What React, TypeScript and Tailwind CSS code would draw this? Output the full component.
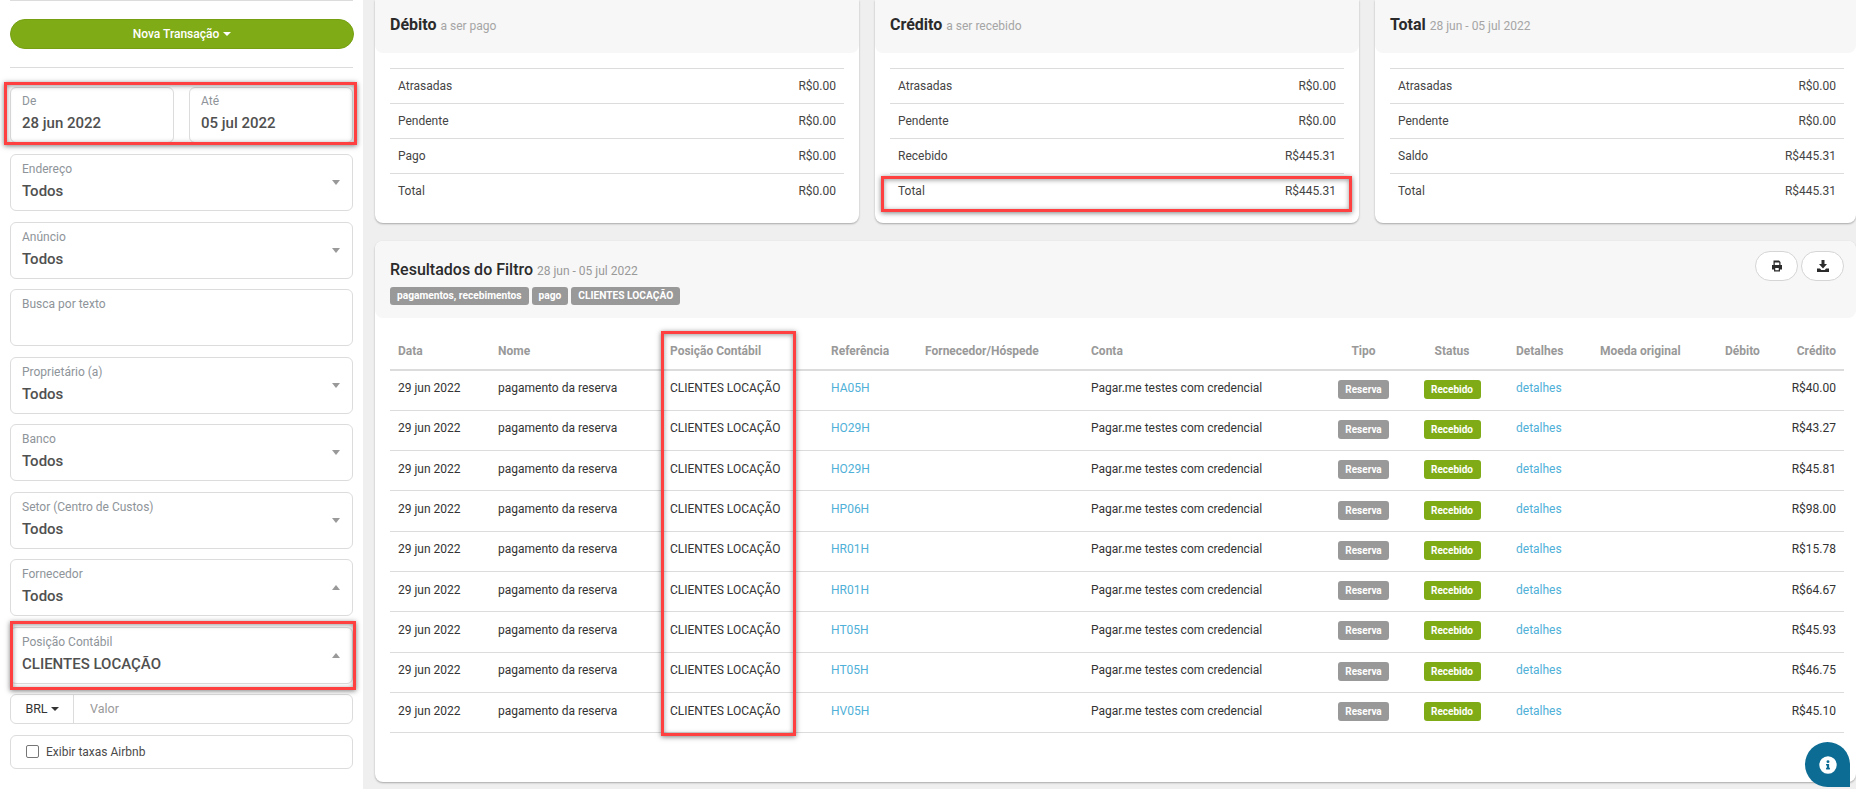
import React from 'react';

const font = { fontFamily: 'Roboto, sans-serif' };

const caret = 'w-0 h-0 border-x-[4px] border-x-transparent';

const SelectBox = ({ label, value, up }: { label: string; value: string; up?: boolean }) => (
  <div className="relative mx-[10px] h-[57px] border border-[#dcdcdc] rounded-[6px] bg-white pl-[11px] pt-[4px]">
    <div className="text-[12px] leading-[20px] text-[#8e9499]">{label}</div>
    <div className="text-[15px] leading-[24px] text-[#505050] font-medium">{value}</div>
    <span
      className={`absolute right-[12px] top-[25px] ${caret} ${up ? 'border-b-[5px] border-b-[#999]' : 'border-t-[5px] border-t-[#999]'}`}
    />
  </div>
);

const Sidebar = () => (
  <aside className="w-[363px] shrink-0 bg-white h-[789px] overflow-hidden">
    <div className="mx-[10px] border-t border-[#dcdcdc]" />
    <button className="mt-[18px] mx-[10px] w-[344px] h-[30px] flex items-center justify-center gap-[4px] rounded-full bg-[#7fac16] border border-[#76a012] text-white text-[12px] font-medium">
      Nova Transação
      <span className={`${caret} border-t-[4px] border-t-white`} />
    </button>
    <div className="mt-[18px] mx-[10px] border-t border-[#dcdcdc]" />
    <div className="mt-[19px] mx-[10px] flex justify-between">
      {[
        ['De', '28 jun 2022'],
        ['Até', '05 jul 2022'],
      ].map(([l, v]) => (
        <div key={l} className="w-[164px] h-[56px] border border-[#dcdcdc] rounded-[6px] pl-[11px] pt-[3px]">
          <div className="text-[12px] leading-[20px] text-[#8e9499]">{l}</div>
          <div className="text-[15px] leading-[24px] text-[#505050] font-medium">{v}</div>
        </div>
      ))}
    </div>
    <div className="mt-[11px] flex flex-col gap-[10.5px]">
      <SelectBox label="Endereço" value="Todos" />
      <SelectBox label="Anúncio" value="Todos" />
      <div className="mx-[10px] h-[57px] border border-[#dcdcdc] rounded-[6px] pl-[11px] pt-[4px] text-[12px] leading-[20px] text-[#8e9499]">
        Busca por texto
      </div>
      <SelectBox label="Proprietário (a)" value="Todos" />
      <SelectBox label="Banco" value="Todos" />
      <SelectBox label="Setor (Centro de Custos)" value="Todos" />
      <SelectBox label="Fornecedor" value="Todos" up />
      <SelectBox label="Posição Contábil" value="CLIENTES LOCAÇÃO" up />
      <div className="mx-[10px] h-[30px] flex border border-[#dcdcdc] rounded-[6px] text-[12.5px]">
        <div className="w-[63px] flex items-center justify-center gap-[3px] border-r border-[#dcdcdc] text-[#333]">
          BRL
          <span className={`${caret} border-t-[4px] border-t-[#333]`} />
        </div>
        <div className="pl-[16px] flex items-center text-[#9a9a9a]">Valor</div>
      </div>
      <div className="mx-[10px] h-[34px] flex items-center gap-[7px] pl-[15px] border border-[#dcdcdc] rounded-[6px] text-[12px] text-[#4a4a4a]">
        <span className="w-[13px] h-[13px] border border-[#767676] rounded-[2px] bg-white" />
        Exibir taxas Airbnb
      </div>
    </div>
  </aside>
);

const SummaryCard = ({
  title,
  sub,
  rows,
  width,
}: {
  title: string;
  sub: string;
  rows: [string, string][];
  width: string;
}) => (
  <div className={`${width} h-[223px] bg-white rounded-b-[8px] shadow-[0_1px_2px_rgba(0,0,0,0.3)]`}>
    <div className="h-[53px] bg-[#f7f7f7] rounded-b-[8px] pl-[15px] pt-[14px] leading-[22px]">
      <span className="text-[16px] font-bold text-[#2b2b2b]">{title}</span>{' '}
      <span className="text-[12px] text-[#a5a5a5]">{sub}</span>
    </div>
    <div className="ml-[15px] w-[454px] mt-[15px]">
      {rows.map(([l, v]) => (
        <div key={l} className="h-[35px] border-t border-[#dcdcdc] px-[8px] flex items-center justify-between text-[12px] text-[#444]">
          <span>{l}</span>
          <span>{v}</span>
        </div>
      ))}
    </div>
  </div>
);

const results = [
  ['HA05H', 'R$40.00'],
  ['HO29H', 'R$43.27'],
  ['HO29H', 'R$45.81'],
  ['HP06H', 'R$98.00'],
  ['HR01H', 'R$15.78'],
  ['HR01H', 'R$64.67'],
  ['HT05H', 'R$45.93'],
  ['HT05H', 'R$46.75'],
  ['HV05H', 'R$45.10'],
];

const colWidths = ['w-[100px]', 'w-[172px]', 'w-[161px]', 'w-[94px]', 'w-[166px]', 'w-[248px]', 'w-[65px]', 'w-[112px]', 'w-[84px]', 'w-[125px]', 'w-[50px]', 'w-[77px]'];

const headers: [string, string][] = [
  ['Data', 'text-left'],
  ['Nome', 'text-left'],
  ['Posição Contábil', 'text-left'],
  ['Referência', 'text-left'],
  ['Fornecedor/Hóspede', 'text-left'],
  ['Conta', 'text-left'],
  ['Tipo', 'text-center'],
  ['Status', 'text-center'],
  ['Detalhes', 'text-left'],
  ['Moeda original', 'text-left'],
  ['Débito', 'text-right'],
  ['Crédito', 'text-right'],
];

const tag = 'h-[18px] px-[7px] flex items-center rounded-[3px] bg-[#999] text-white text-[10.2px] font-bold';
const badge = 'inline-flex h-[19px] items-center justify-center rounded-[3px] text-white text-[10px] font-bold';
const cell = 'px-[8px] pb-[4px]';
const annotation = 'absolute border-[3px] border-[#ff4040] shadow-[0_1px_5px_rgba(0,0,0,0.5),inset_0_1px_5px_rgba(0,0,0,0.4)] pointer-events-none';

const App: React.FC = () => (
  <div style={font} className="relative w-[1856px] h-[789px] overflow-hidden flex bg-[#efefef]">
    <Sidebar />
    <main className="flex-1 pl-[12px] min-w-0">
      <div className="flex gap-[16px]">
        <SummaryCard
          title="Débito"
          sub="a ser pago"
          width="w-[484px]"
          rows={[['Atrasadas', 'R$0.00'], ['Pendente', 'R$0.00'], ['Pago', 'R$0.00'], ['Total', 'R$0.00']]}
        />
        <SummaryCard
          title="Crédito"
          sub="a ser recebido"
          width="w-[484px]"
          rows={[['Atrasadas', 'R$0.00'], ['Pendente', 'R$0.00'], ['Recebido', 'R$445.31'], ['Total', 'R$445.31']]}
        />
        <SummaryCard
          title="Total"
          sub="28 jun - 05 jul 2022"
          width="w-[481px]"
          rows={[['Atrasadas', 'R$0.00'], ['Pendente', 'R$0.00'], ['Saldo', 'R$445.31'], ['Total', 'R$445.31']]}
        />
      </div>
      <section className="mt-[18px] w-[1481px] h-[541px] bg-white rounded-[8px] shadow-[0_1px_2px_rgba(0,0,0,0.3)]">
        <div className="h-[77px] bg-[#f7f7f7] rounded-[8px] pl-[15px] pr-[12px] pt-[10px] flex justify-between">
          <div className="pt-[7px]">
            <div className="leading-[24px]">
              <span className="text-[16px] font-medium text-[#2b2b2b]">Resultados do Filtro</span>{' '}
              <span className="text-[12px] text-[#999]">28 jun - 05 jul 2022</span>
            </div>
            <div className="mt-[4px] flex gap-[3px]">
              <span className={tag}>pagamentos, recebimentos</span>
              <span className={tag}>pago</span>
              <span className={tag}>CLIENTES LOCAÇÃO</span>
            </div>
          </div>
          <div className="flex gap-[3px]">
            <button className="w-[43px] h-[30px] flex items-center justify-center rounded-full border border-[#d5d5d5] bg-white">
              <svg width="12" height="12" viewBox="0 0 24 24" fill="#2b2b2b">
                <path d="M5 1h11l3 3v7h-2.5V5h-9v6H5zM2 10h20v9h-4v4H6v-4H2zm6.5 6v4.5h7V16z" />
              </svg>
            </button>
            <button className="w-[43px] h-[30px] flex items-center justify-center rounded-full border border-[#d5d5d5] bg-white">
              <svg width="12" height="12" viewBox="0 0 24 24" fill="#2b2b2b">
                <path d="M9 0h6v8h5l-8 9-8-9h5zM0 17h6l2.5 3h7l2.5-3h6v7H0z" />
              </svg>
            </button>
          </div>
        </div>
        <div className="ml-[15px] mt-[13px] w-[1454px]">
          <table className="table-fixed w-full text-[12px] border-collapse">
            <colgroup>
              {colWidths.map((w, i) => (
                <col key={i} className={w} />
              ))}
            </colgroup>
            <thead>
              <tr className="h-[39px] border-b-2 border-[#dcdcdc]">
                {headers.map(([h, align]) => (
                  <th key={h} className={`px-[8px] pt-[2px] ${align} font-bold text-[#999] whitespace-nowrap`}>
                    {h}
                  </th>
                ))}
              </tr>
            </thead>
            <tbody>
              {results.map(([ref, amount], i) => (
                <tr key={i} className="h-[40.3px] border-b border-[#dcdcdc] text-[#333]">
                  <td className={cell}>29 jun 2022</td>
                  <td className={cell}>pagamento da reserva</td>
                  <td className={`${cell} whitespace-nowrap`}>CLIENTES LOCAÇÃO</td>
                  <td className={`${cell} text-[#4fb0d8]`}>{ref}</td>
                  <td className={cell} />
                  <td className={cell}>Pagar.me testes com credencial</td>
                  <td className="text-center pb-[2px]">
                    <span className={`${badge} w-[51px] bg-[#999]`}>Reserva</span>
                  </td>
                  <td className="text-center pb-[2px]">
                    <span className={`${badge} w-[57px] bg-[#7fac16]`}>Recebido</span>
                  </td>
                  <td className={`${cell} text-[#4fb0d8]`}>detalhes</td>
                  <td className={cell} />
                  <td className={cell} />
                  <td className={`${cell} text-right`}>{amount}</td>
                </tr>
              ))}
            </tbody>
          </table>
        </div>
      </section>
    </main>

    {/* annotation boxes drawn over the screenshot */}
    <div className={`${annotation} left-[4px] top-[82px] w-[353px] h-[63px]`} />
    <div className={`${annotation} left-[10px] top-[621px] w-[346px] h-[69px]`} />
    <div className={`${annotation} left-[881px] top-[176px] w-[471px] h-[36px]`} />
    <div className={`${annotation} left-[661px] top-[331px] w-[135px] h-[405px]`} />

    <div className="absolute left-[1805px] top-[742px] w-[45px] h-[45px] flex items-center justify-center bg-[#0d6c94] rounded-t-full rounded-bl-full rounded-br-[6px]">
      <svg width="18" height="18" viewBox="0 0 512 512" fill="#fff">
        <path d="M256 8a248 248 0 1 0 0 496 248 248 0 0 0 0-496zm0 110a42 42 0 1 1 0 84 42 42 0 0 1 0-84zm56 254c0 7-5 12-12 12h-88c-7 0-12-5-12-12v-24c0-7 5-12 12-12h12v-64h-12c-7 0-12-5-12-12v-24c0-7 5-12 12-12h64c7 0 12 5 12 12v100h12c7 0 12 5 12 12z" />
      </svg>
    </div>
  </div>
);

export default App;
